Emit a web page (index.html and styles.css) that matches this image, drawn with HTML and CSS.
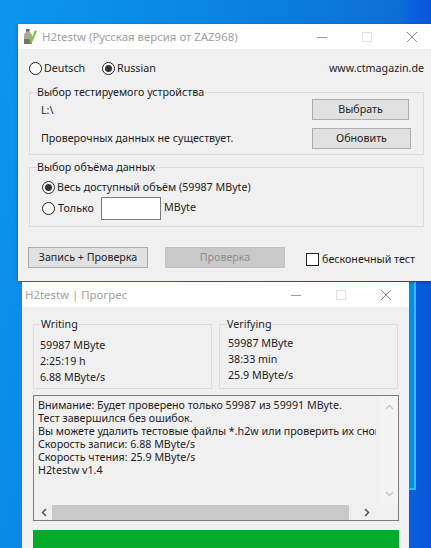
FILE: index.html
```html
<!DOCTYPE html>
<html lang="ru">
<head>
<meta charset="utf-8">
<title>H2testw</title>
<link rel="stylesheet" href="styles.css">
</head>
<body>
<div class="desktop">
  <div class="glow"></div>
  <section class="window main-window">
    <header class="titlebar">
      <svg class="app-icon" width="14" height="17" viewBox="0 0 14 17"><path d="M3 1h3.500v3L9 6.500V16H1V6.500L3 4z" fill="#a8a59c"/><path d="M3 1h3.500v2.500H3z" fill="#6e6c66"/><path d="M1 11h8v5H1z" fill="#77746c"/><path d="M6 7.500l2.200 6.500L13 2.500" fill="none" stroke="#7cc34a" stroke-width="2"/></svg>
      <span class="title-text">H2testw (Русская версия от ZAZ968)</span>
      <span class="controls main-controls">
        <svg width="12" height="12" viewBox="0 0 12 12"><path d="M1 6.500h10" stroke="#9a9a9a"/></svg>
        <svg width="12" height="12" viewBox="0 0 12 12"><rect x="1.500" y="1.500" width="9" height="9" fill="none" stroke="#e3e3e3"/></svg>
        <svg width="12" height="12" viewBox="0 0 12 12"><path d="M1 1l10 10M11 1L1 11" stroke="#8a8a8a"/></svg>
      </span>
    </header>
    <div class="body main-body">
      <div class="lang-row">
        <label class="opt deutsch"><i class="radio"></i>Deutsch</label>
        <label class="opt"><i class="radio on"></i>Russian</label>
        <span class="site">www.ctmagazin.de</span>
      </div>
      <fieldset class="group device-group">
        <legend>Выбор тестируемого устройства</legend>
        <div class="device-info">
          <div class="path">L:\</div>
          <div class="none">Проверочных данных не существует.</div>
        </div>
        <div class="device-buttons">
          <button class="btn pick">Выбрать</button>
          <button class="btn refresh">Обновить</button>
        </div>
      </fieldset>
      <fieldset class="group size-group">
        <legend>Выбор объёма данных</legend>
        <label class="opt all"><i class="radio on"></i>Весь доступный объём (59987 MByte)</label>
        <div class="only-row">
          <label class="opt"><i class="radio"></i>Только</label>
          <span class="field"></span>
          <span class="unit">MByte</span>
        </div>
      </fieldset>
      <div class="action-row">
        <button class="btn wide">Запись + Проверка</button>
        <button class="btn wide disabled">Проверка</button>
        <label class="opt endless"><i class="check"></i>бесконечный тест</label>
      </div>
    </div>
  </section>
  <section class="window progress-window">
    <header class="titlebar">
      <span class="title-text plain">H2testw | Прогрес</span>
      <span class="controls progress-controls">
        <svg width="12" height="12" viewBox="0 0 12 12"><path d="M1 6.500h10" stroke="#9a9a9a"/></svg>
        <svg width="12" height="12" viewBox="0 0 12 12"><rect x="1.500" y="1.500" width="9" height="9" fill="none" stroke="#e3e3e3"/></svg>
        <svg width="12" height="12" viewBox="0 0 12 12"><path d="M1 1l10 10M11 1L1 11" stroke="#8a8a8a"/></svg>
      </span>
    </header>
    <div class="body progress-body">
      <div class="stats">
        <fieldset class="group stat writing">
          <legend>Writing</legend>
          <div>59987 MByte</div>
          <div>2:25:19 h</div>
          <div>6.88 MByte/s</div>
        </fieldset>
        <fieldset class="group stat verifying">
          <legend>Verifying</legend>
          <div>59987 MByte</div>
          <div>38:33 min</div>
          <div>25.9 MByte/s</div>
        </fieldset>
      </div>
      <div class="log">
        <div class="log-view">
          <div class="log-text">
            <div>Внимание: Будет проверено только 59987 из 59991 MByte.</div>
            <div>Тест завершился без ошибок.</div>
            <div>Вы можете удалить тестовые файлы *.h2w или проверить их снова.</div>
            <div>Скорость записи: 6.88 MByte/s</div>
            <div>Скорость чтения: 25.9 MByte/s</div>
            <div>H2testw v1.4</div>
          </div>
          <div class="vscroll">
            <svg width="9" height="6" viewBox="0 0 9 6"><path d="M1 5l3.500-3.500L8 5" fill="none" stroke="#c8c8c8" stroke-width="1.500"/></svg>
            <svg width="9" height="6" viewBox="0 0 9 6"><path d="M1 1l3.500 3.500L8 1" fill="none" stroke="#c8c8c8" stroke-width="1.500"/></svg>
          </div>
        </div>
        <div class="hscroll">
          <svg width="6" height="9" viewBox="0 0 6 9"><path d="M5 1L1.500 4.500 5 8" fill="none" stroke="#555" stroke-width="1.500"/></svg>
          <div class="thumb"></div>
          <svg width="6" height="9" viewBox="0 0 6 9"><path d="M1 1l3.500 3.500L1 8" fill="none" stroke="#555" stroke-width="1.500"/></svg>
        </div>
      </div>
      <div class="progress"></div>
    </div>
  </section>
</div>
</body>
</html>
```
FILE: styles.css
```css
* { box-sizing: border-box; }
html, body { margin: 0; height: 100%; }
body { overflow: hidden; font: 10.7px/13px "Noto Sans", Roboto, sans-serif; color: #1c1c1c; }
.desktop {
  position: relative;
  width: 431px;
  height: 548px;
  overflow: hidden;
  background:
    linear-gradient(90deg, transparent 400px, #0a5ee0 416px, #0a55d8 431px),
    linear-gradient(105deg, #0a96f0 0%, #0a84e4 40%, #0d58c8 100%);
}
.glow {
  position: absolute;
  left: 409px;
  top: 282px;
  width: 7px;
  height: 208px;
  border-right: 2px solid #2fbcee;
  border-bottom: 2px solid #2fbcee;
  background: #0d8ae2;
}
.window { position: absolute; background: #f0f0f0; }
.main-window { left: 18px; top: 24px; width: 413px; height: 257px; box-shadow: 0 1px 3px rgba(0,0,0,.35); }
.progress-window { left: 22px; top: 282px; width: 387px; height: 266px; }
.titlebar { height: 25px; background: #fff; display: flex; align-items: center; font-size: 11.4px; color: #a0a0a0; }
.app-icon { margin-left: 5px; margin-right: 5px; }
.title-text.plain { margin-left: 3px; }
.controls { margin-left: auto; display: flex; }
.main-controls { gap: 33px; margin-right: 13px; }
.progress-controls { gap: 33px; margin-right: 17px; }

.radio { width: 13px; height: 13px; border: 1px solid #222; border-radius: 50%; background: #fff; display: inline-block; flex: none; position: relative; }
.radio.on::after { content: ""; position: absolute; left: 2px; top: 2px; width: 7px; height: 7px; border-radius: 50%; background: #333; }
.check { width: 13px; height: 13px; border: 1px solid #222; background: #fff; display: inline-block; flex: none; }
.opt { display: inline-flex; align-items: center; gap: 2px; white-space: nowrap; }

.main-body { padding: 13px 7px 0 11px; }
.lang-row { display: flex; align-items: center; height: 13px; }
.deutsch { width: 73px; }
.site { margin-left: auto; margin-top: -1px; }

.group { margin: 0; padding: 0; border: 1px solid #dcdcdc; min-width: 0; }
.group legend { padding: 0 1px 0 0; margin-left: 7px; line-height: 13px; }
.device-group { margin-top: 11px; height: 69px; display: flex; justify-content: space-between; }
.device-info { padding: 5px 0 0 11px; }
.none { margin-top: 15px; }
.device-buttons { display: flex; flex-direction: column; align-items: flex-start; gap: 8px; width: 111px; }
.btn { height: 21px; border: 1px solid #adadad; background: #e1e1e1; font: inherit; color: #222; padding: 0; display: block; }
.pick { width: 97px; }
.refresh { width: 99px; }

.size-group { margin-top: 6px; height: 66px; padding-top: 7px; }
.all { display: flex; margin-left: 12px; }
.only-row { display: flex; align-items: center; margin: 3px 0 0 12px; height: 23px; }
.only-row .opt { width: 59px; gap: 3px; }
.field { width: 60px; height: 23px; background: #fff; border: 1px solid #7a7a7a; margin-right: 3px; }
.unit { margin-top: -2px; }

.action-row { display: flex; align-items: flex-start; margin-top: 20px; margin-left: -1px; }
.wide { width: 120px; }
.wide + .wide { margin-left: 17px; }
.disabled { background: #c9c9c9; border-color: #c2c2c2; color: #8f8f8f; }
.endless { margin: 6px 0 0 21px; gap: 3px; }

.progress-body { padding: 11px 10px 0 11px; }
.stats { display: grid; grid-template-columns: 179px 179px; gap: 7px; }
.stat { height: 71px; }
.stat legend { margin-left: 7px; }
.writing { padding-top: 6px; }
.verifying { padding-top: 4px; }
.writing div { margin-left: 6px; line-height: 16px; }
.verifying div { margin-left: 8px; line-height: 16px; }
.log { margin-top: 6px; width: 366px; height: 126px; border: 1px solid #7d7d7d; }
.log-view { display: flex; height: 108px; }
.log-text { width: 342px; margin-right: 4px; padding: 3px 0 0 4px; overflow: hidden; white-space: nowrap; }
.vscroll { flex: 1; background: #f4f4f4; display: flex; flex-direction: column; justify-content: space-between; align-items: center; padding: 8px 0 7px; }
.hscroll { display: flex; align-items: center; height: 16px; padding: 0 22px 0 7px; }
.thumb { width: 297px; height: 15px; margin: 0 15px 0 5px; background: #c9c9c9; }
.progress { margin-top: 9px; width: 366px; height: 18px; background: #06ab2b; }
```
